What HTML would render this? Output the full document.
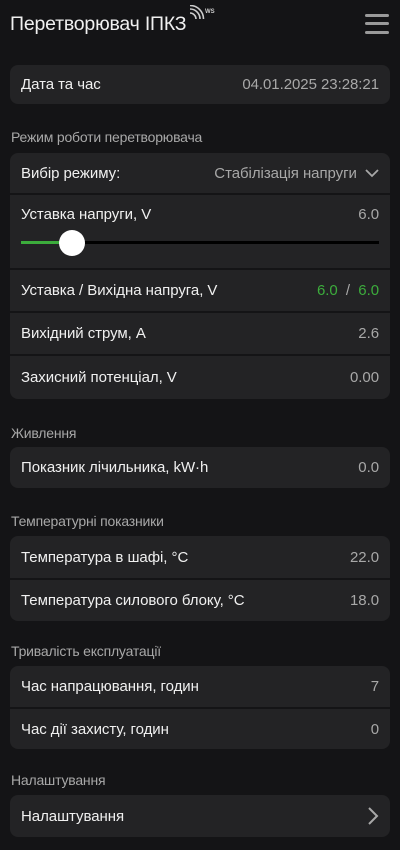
<!DOCTYPE html>
<html><head><meta charset="utf-8"><style>
*{margin:0;padding:0;box-sizing:border-box}
body{width:400px;height:850px;background:#141416;font-family:"Liberation Sans",sans-serif;color:#f0f0f0;position:relative;overflow:hidden}
.t{position:absolute;left:10px;top:13px;font-size:19.5px;letter-spacing:-0.2px}
.menu{position:absolute;left:365px;width:24px;height:3px;background:#9a9a9a;border-radius:2px}
.lbl{position:absolute;left:11px;font-size:14px;color:#a8a8a8;letter-spacing:-0.2px}
.card{position:absolute;left:10px;width:380px;border-radius:8px;overflow:hidden;background:#141416}
.row{background:#232325;height:41px;display:flex;align-items:center;justify-content:space-between;padding:0 11px;font-size:15px;letter-spacing:-0.05px;margin-bottom:2px}
.row:last-child{margin-bottom:0}
.v{color:#a8a8a8}
.g{color:#3cac3c}
</style></head><body>
<div class="t">Перетворювач ІПКЗ</div>
<svg style="position:absolute;left:188px;top:5px" width="30" height="20" viewBox="0 0 30 20"><g fill="none" stroke="#ccc" stroke-width="1.6"><path d="M2 8a6 6 0 0 1 6 6"/><path d="M2 4a10 10 0 0 1 10 10"/><path d="M2 0.5a13.5 13.5 0 0 1 13.5 13.5"/></g><text x="17" y="8" font-size="6" fill="#ccc" font-weight="bold" font-family="Liberation Sans">WS</text></svg>
<div class="menu" style="top:14px"></div><div class="menu" style="top:22px"></div><div class="menu" style="top:31px"></div>
<div class="card" style="top:65px"><div class="row" style="height:39px"><span>Дата та час</span><span class="v">04.01.2025 23:28:21</span></div></div>
<div class="lbl" style="top:129px">Режим роботи перетворювача</div>
<div class="card" style="top:153px">
<div class="row" style="height:40px"><span>Вибір режиму:</span><span class="v">Стабілізація напруги <svg width="14" height="10" viewBox="0 0 14 10" style="margin-left:4px"><path d="M1 2l6 6 6-6" stroke="#a8a8a8" stroke-width="1.8" fill="none"/></svg></span></div>
<div class="row" style="height:73px;display:block;padding-top:11px;position:relative"><div style="display:flex;justify-content:space-between"><span>Уставка напруги, V</span><span class="v">6.0</span></div>
<div style="position:absolute;left:11px;right:11px;top:46px;height:3px;background:#000"></div>
<div style="position:absolute;left:11px;width:40px;top:46px;height:3px;background:#3cac3c"></div>
<div style="position:absolute;left:49px;top:35px;width:26px;height:26px;border-radius:50%;background:#fff"></div></div>
<div class="row"><span>Уставка / Вихідна напруга, V</span><span><span class="g">6.0</span> <span class="v">&nbsp;/&nbsp;</span> <span class="g">6.0</span></span></div>
<div class="row"><span>Вихідний струм, А</span><span class="v">2.6</span></div>
<div class="row" style="height:43px"><span>Захисний потенціал, V</span><span class="v">0.00</span></div>
</div>
<div class="lbl" style="top:425px">Живлення</div>
<div class="card" style="top:447px"><div class="row"><span>Показник лічильника, kW·h</span><span class="v">0.0</span></div></div>
<div class="lbl" style="top:513px">Температурні показники</div>
<div class="card" style="top:536px"><div class="row" style="height:42px"><span>Температура в шафі, °C</span><span class="v">22.0</span></div><div class="row"><span>Температура силового блоку, °C</span><span class="v">18.0</span></div></div>
<div class="lbl" style="top:643px">Тривалість експлуатації</div>
<div class="card" style="top:666px"><div class="row"><span>Час напрацювання, годин</span><span class="v">7</span></div><div class="row" style="height:40px"><span>Час дії захисту, годин</span><span class="v">0</span></div></div>
<div class="lbl" style="top:772px">Налаштування</div>
<div class="card" style="top:795px"><div class="row" style="height:42px"><span>Налаштування</span><svg width="12" height="20" viewBox="0 0 12 20"><path d="M2 2l8 8-8 8" stroke="#a8a8a8" stroke-width="2" fill="none"/></svg></div></div>
</body></html>
